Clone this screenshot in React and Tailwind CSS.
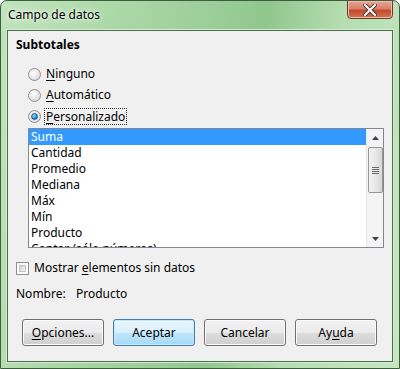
import { useState } from 'react'

const items = ['Suma', 'Cantidad', 'Promedio', 'Mediana', 'Máx', 'Mín', 'Producto', 'Contar (sólo números)']

function Radio({ checked }) {
  return (
    <span className="relative w-[13px] h-[13px] rounded-full border border-[#8e8f8f] bg-[radial-gradient(circle_at_40%_35%,#ffffff_0%,#e6e6e6_55%,#cfcfcf_100%)] flex items-center justify-center shrink-0">
      {checked && (
        <span className="w-[7px] h-[7px] rounded-full bg-[radial-gradient(circle_at_40%_35%,#9be2ff_0%,#2a8ad6_55%,#0c4f8e_100%)] border border-[#1e5b94]" />
      )}
    </span>
  )
}

function Btn({ children, primary }) {
  return (
    <button
      className={
        primary
          ? 'w-[82px] h-[27px] rounded-[3px] border border-[#3c7fb1] bg-[linear-gradient(#eaf6fd_0%,#d9f0fc_50%,#bee6fd_51%,#a7d9f5_100%)] shadow-[inset_0_0_0_1px_#c6e8f8] text-[12px] text-black'
          : 'w-[82px] h-[27px] rounded-[3px] border border-[#707070] bg-[linear-gradient(#f2f2f2_0%,#ebebeb_50%,#dddddd_51%,#cfcfcf_100%)] shadow-[inset_0_0_0_1px_#fcfcfc] text-[12px] text-black'
      }
    >
      {children}
    </button>
  )
}

export default function App() {
  const [sel] = useState(0)

  return (
    <div className="w-[400px] h-[369px] flex flex-col rounded-t-[7px] border border-[#3d5e3d] bg-[linear-gradient(100deg,#c2e4be_0%,#acd8a8_25%,#98cc95_50%,#90c78d_58%,#b6deb2_75%,#c6e7c2_100%)] font-['Noto_Sans','Open_Sans',sans-serif] text-[12px] text-black overflow-hidden">
      {/* title bar */}
      <div className="h-[29px] shrink-0 flex items-start justify-between pl-[7px] pr-[6px]">
        <span className="mt-[5px] text-[12px] [text-shadow:0_0_6px_#ffffff,0_0_3px_#ffffff]">Campo de datos</span>
        <button className="w-[46px] h-[19px] -mt-px rounded-b-[4px] border border-[#6b3a2e] bg-[linear-gradient(#e6a797_0%,#d88068_45%,#c34a2e_55%,#d27452_100%)] shadow-[inset_0_0_0_1px_#efbcae] flex items-center justify-center">
          <svg width="14" height="12" viewBox="0 0 14 12">
            <path d="M2 1 L12 11 M12 1 L2 11" stroke="#4a3a36" strokeWidth="4" strokeLinecap="square" />
            <path d="M2 1 L12 11 M12 1 L2 11" stroke="#ffffff" strokeWidth="2" strokeLinecap="square" />
          </svg>
        </button>
      </div>

      {/* content */}
      <div className="flex-1 mx-[6px] mb-[6px] border border-[#4b6e4b] shadow-[0_0_0_1px_#d4ecd2] bg-[#f0f0f0] flex flex-col pl-[8px] pr-[8px]">
        <div className="mt-[5px] font-bold">Subtotales</div>

        <div className="mt-[11px] pl-[12px] flex flex-col gap-[3px]">
          <label className="h-[18px] flex items-center gap-[5px]">
            <Radio />
            <span><u className="underline-offset-2">N</u>inguno</span>
          </label>
          <label className="h-[18px] flex items-center gap-[5px]">
            <Radio />
            <span><u className="underline-offset-2">A</u>utomático</span>
          </label>
          <label className="h-[18px] flex items-center gap-[4px]">
            <Radio checked />
            <span className="outline outline-1 outline-dotted outline-[#333] px-px leading-[15px]"><u className="underline-offset-2">P</u>ersonalizado</span>
          </label>
        </div>

        {/* list box */}
        <div className="mt-[3px] ml-[12px] w-[356px] h-[120px] border border-[#828790] bg-white flex shrink-0">
          <div className="flex-1 overflow-hidden">
            {items.map((it, i) => (
              <div
                key={it}
                className={
                  i === sel
                    ? 'h-[16px] leading-[16px] pl-[2px] bg-[#3399ff] text-white'
                    : 'h-[16px] leading-[16px] pl-[2px] whitespace-nowrap'
                }
              >
                {it}
              </div>
            ))}
          </div>
          <div className="w-[17px] bg-[#f4f4f4] border-l border-[#e6e6e6] flex flex-col items-center">
            <div className="h-[17px] flex items-center justify-center">
              <svg width="7" height="4" viewBox="0 0 7 4"><path d="M0 4 L3.5 0 L7 4 Z" fill="#404040" /></svg>
            </div>
            <div className="w-[15px] h-[46px] mt-px rounded-[2px] border border-[#979797] bg-[linear-gradient(90deg,#f3f3f3,#e8e8e8_50%,#d6d6d6)] flex flex-col items-center justify-center gap-[1px]">
              <span className="w-[7px] h-px bg-[#6a6a6a]" />
              <span className="w-[7px] h-px bg-[#6a6a6a]" />
              <span className="w-[7px] h-px bg-[#6a6a6a]" />
              <span className="w-[7px] h-px bg-[#6a6a6a]" />
            </div>
            <div className="flex-1" />
            <div className="h-[17px] flex items-center justify-center">
              <svg width="7" height="4" viewBox="0 0 7 4"><path d="M0 0 L7 0 L3.5 4 Z" fill="#404040" /></svg>
            </div>
          </div>
        </div>

        <label className="mt-[12px] h-[16px] flex items-center gap-[5px]">
          <span className="w-[13px] h-[13px] border border-[#8e8f8f] bg-white p-[2px] shrink-0">
            <span className="block w-full h-full border border-[#c4c4c4] bg-[linear-gradient(135deg,#cfcfcf,#f6f6f6)]" />
          </span>
          <span>Mostrar <u className="underline-offset-2">e</u>lementos sin datos</span>
        </label>

        <div className="mt-[9px] flex">
          <span className="w-[60px]">Nombre:</span>
          <span>Producto</span>
        </div>

        <div className="mt-[16px] pl-[6px] flex gap-[9px]">
          <Btn><u className="underline-offset-2">O</u>pciones...</Btn>
          <Btn primary>Aceptar</Btn>
          <Btn>Cancelar</Btn>
          <Btn>Ay<u className="underline-offset-2">u</u>da</Btn>
        </div>
      </div>
    </div>
  )
}
